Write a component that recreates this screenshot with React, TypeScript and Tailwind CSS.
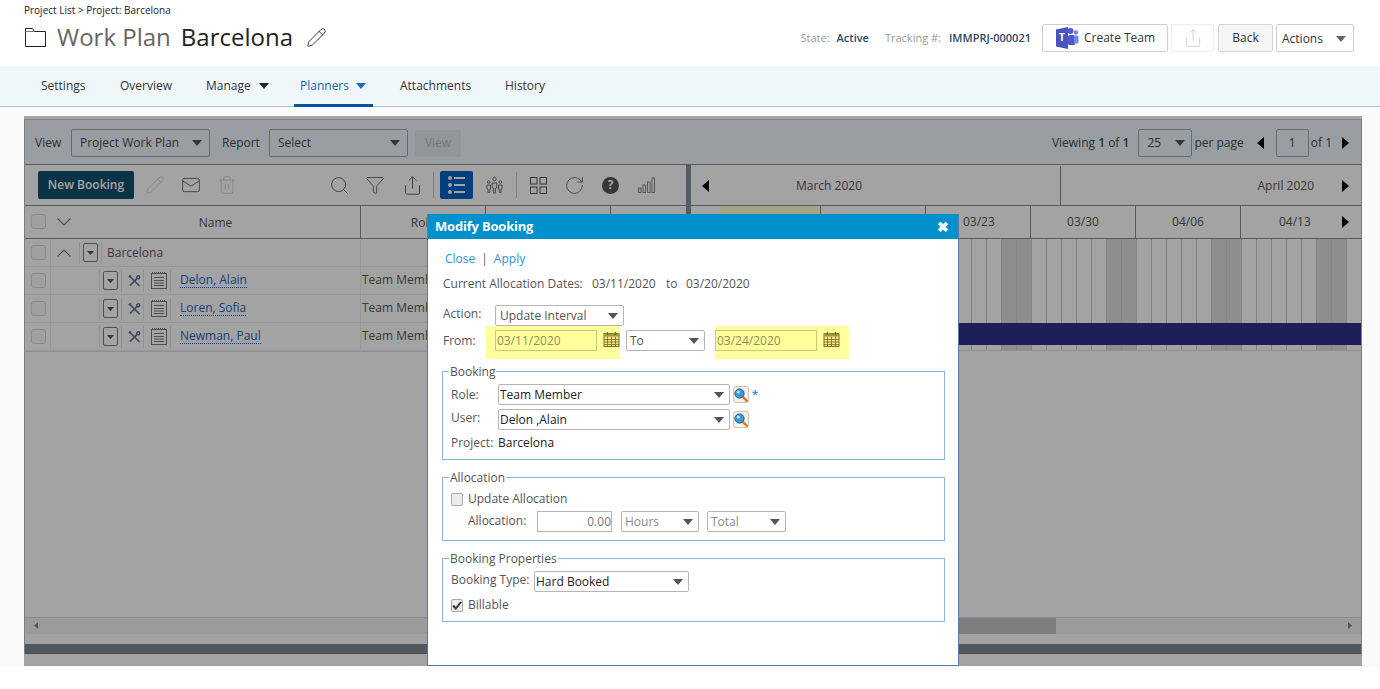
import React from "react";
import { Pencil, Mail, Trash2, Search, Filter, Share, RotateCw } from "lucide-react";

function Caret({ color = "#555" }: { color?: string }) {
  return (
    <svg width="10" height="6" viewBox="0 0 10 6" className="shrink-0">
      <path d="M0 0h10L5 6z" fill={color} />
    </svg>
  );
}

function Sel({ label, className, textClass }: { label: string; className: string; textClass?: string }) {
  return (
    <div className={"flex items-center justify-between bg-white border border-[#b5b5b5] rounded-[2px] pr-[5px] shrink-0 " + className}>
      <span className={"truncate " + (textClass ?? "pl-[3px] text-[#333]")}>{label}</span>
      <Caret />
    </div>
  );
}

function Arrow({ dir, color = "#000", size = 10 }: { dir: "l" | "r"; color?: string; size?: number }) {
  return (
    <svg width={size * 0.7} height={size * 1.2} viewBox="0 0 7 12" className="shrink-0">
      <path d={dir === "l" ? "M7 0v12L0 6z" : "M0 0v12l7-6z"} fill={color} />
    </svg>
  );
}

function Chev({ up }: { up?: boolean }) {
  return (
    <svg width="14" height="8" viewBox="0 0 14 8" className="shrink-0" fill="none" stroke="#7a7a7a" strokeWidth="1.1">
      <path d={up ? "M0.5 7.500 7 1l6.500 6.500" : "M0.5 0.500 7 7l6.500-6.500"} />
    </svg>
  );
}

function Teams() {
  return (
    <svg width="24" height="24" viewBox="0 0 24 24" className="shrink-0">
      <circle cx="15.5" cy="5" r="3" fill="#5059c9" />
      <circle cx="21" cy="6.5" r="2.2" fill="#7b83eb" />
      <rect x="13" y="9" width="7" height="10" rx="1.5" fill="#5059c9" />
      <rect x="19" y="9.5" width="4.5" height="8" rx="1.5" fill="#7b83eb" />
      <path d="M1 3.5 13 1v22L1 20.5z" fill="#4b53bc" />
      <text x="7" y="15" textAnchor="middle" fontSize="10" fontWeight="700" fill="#fff" fontFamily="Open Sans, sans-serif">T</text>
    </svg>
  );
}

function Calendar() {
  return (
    <svg width="17" height="17" viewBox="0 0 17 17" className="shrink-0">
      <rect x="1" y="2.500" width="15" height="13" fill="#f6e28a" stroke="#7a7020" />
      <rect x="1" y="2.500" width="15" height="3" fill="#a09a3a" />
      <path d="M1 8.500h15M1 11h15M1 13.500h15M4.500 5.500v10M8.500 5.500v10M12.500 5.500v10" stroke="#7a7020" strokeWidth="0.8" />
      <path d="M4.500 1v3M12.500 1v3" stroke="#6a6a3a" strokeWidth="1.2" />
    </svg>
  );
}

function Lookup() {
  return (
    <div className="w-[16px] h-[17px] border border-[#c9c4ae] rounded-[3px] bg-[#f4f1e4] flex items-center justify-center shrink-0">
      <svg width="14" height="14" viewBox="0 0 14 14">
        <path d="M8.500 8.500 13 13" stroke="#d9752b" strokeWidth="2.4" strokeLinecap="round" />
        <circle cx="5.500" cy="5.500" r="4.600" fill="#3d9ad6" stroke="#1d5f96" />
        <circle cx="4.300" cy="4" r="1.600" fill="#bfe3f8" />
      </svg>
    </div>
  );
}

function RowCheck() {
  return <div className="w-[15px] h-[15px] border border-[#d6d6d6] rounded-[3px] bg-[#fbfbfb] shrink-0" />;
}

function DropBox() {
  return (
    <div className="w-[15px] h-[19px] border border-[#7a7a7a] rounded-[2px] flex items-center justify-center shrink-0">
      <svg width="7" height="4" viewBox="0 0 7 4"><path d="M0 0h7L3.500 4z" fill="#555" /></svg>
    </div>
  );
}

function Tools() {
  return (
    <svg width="13" height="14" viewBox="0 0 14 14" className="shrink-0" fill="none" stroke="#6b7a96" strokeWidth="1.700">
      <path d="M1.500 1.500 12.500 12.500" />
      <path d="M12.500 1.500 2 12" />
      <circle cx="11" cy="3" r="1.600" fill="#fff" />
      <path d="M0.800 3 3 0.800" />
    </svg>
  );
}

function Notes() {
  return (
    <svg width="16" height="17" viewBox="0 0 16 17" className="shrink-0" fill="none" stroke="#7a7a7a" strokeWidth="1">
      <rect x="0.500" y="1.500" width="15" height="15" />
      <path d="M3 5.500h10M3 8.500h10M3 11h10M3 13.500h10" />
      <path d="M1 1h14" strokeDasharray="1 1" strokeWidth="2" />
    </svg>
  );
}

function PersonRow({ name }: { name: string }) {
  return (
    <div className="flex h-[28px] border-b border-[#eeeeee]">
      <div className="w-[26px] flex items-center justify-center border-r border-[#eeeeee] pl-[1px] shrink-0"><RowCheck /></div>
      <div className="w-[310px] flex items-center border-r border-[#eeeeee] shrink-0 pl-[48px]">
        <div className="h-[22px] flex items-center border-l border-[#e5e5e5] pl-[3px] pr-[3px]"><DropBox /></div>
        <div className="h-[22px] flex items-center border-l border-[#e5e5e5] pl-[6px] pr-[2px]"><Tools /></div>
        <div className="h-[22px] flex items-center border-x border-[#e5e5e5] pl-[7px] pr-[3px]"><Notes /></div>
        <span className="ml-[9px] mb-[2px] text-[#2968c0] border-b border-dotted border-[#1f5fc0] leading-[15px]">{name}</span>
      </div>
      <div className="w-[125px] flex items-center pl-[1px] pb-[2px] border-r border-[#eeeeee] text-[#5a5a5a] shrink-0">Team Member</div>
      <div className="flex-1" />
    </div>
  );
}

const lightDay = "w-[15px] shrink-0 border-r border-[#cbcbcb]";
const darkDay = "w-[15px] shrink-0 bg-[#dedede] border-r border-[#d2d2d2]";

function Week() {
  return (
    <div className="flex shrink-0">
      <div className={lightDay} />
      <div className={lightDay} />
      <div className={lightDay} />
      <div className={lightDay} />
      <div className={lightDay} />
      <div className={darkDay} />
      <div className={darkDay} />
    </div>
  );
}

function Panel() {
  return (
    <div className="relative h-full bg-white flex flex-col overflow-hidden">
      <div className="h-[4px] shrink-0 border-b border-[#d0d0d0]" />
      <div className="flex-1 min-h-0 flex flex-col border-x border-[#c4c4c4]">
        {/* view bar */}
        <div className="h-[45px] shrink-0 bg-[#eef8fc] border-b border-[#8f8f8f] flex items-center pt-[2px] pl-[10px] pr-[12px] text-[#4a4a4a]">
          <span className="w-[36px]">View</span>
          <Sel label="Project Work Plan" className="w-[139px] h-[28px] !border-[#a8a8a8] !bg-transparent !pr-[7px]" textClass="pl-[8px] text-[#4a4a4a]" />
          <span className="ml-[12px] w-[47px]">Report</span>
          <Sel label="Select" className="w-[139px] h-[28px] !border-[#a8a8a8] !bg-transparent !pr-[7px]" textClass="pl-[8px] text-[#4a4a4a]" />
          <div className="ml-[7px] w-[46px] h-[27px] bg-[#e1ebf0] rounded-[2px] flex items-center justify-center text-[#b5bfc4]">View</div>
          <div className="flex-1" />
          <span>Viewing <b className="font-semibold">1</b> of <b className="font-semibold">1</b></span>
          <Sel label="25" className="ml-[9px] w-[54px] h-[28px] !border-[#a8a8a8] !bg-transparent !pr-[6px]" textClass="pl-[8px] text-[#4a4a4a]" />
          <span className="ml-[2px]">per page</span>
          <div className="ml-[13px] w-[10px]"><Arrow dir="l" /></div>
          <div className="ml-[9px] w-[33px] h-[28px] border border-[#a8a8a8] rounded-[2px] flex items-center justify-center">1</div>
          <span className="ml-[2px]">of 1</span>
          <div className="ml-[10px]"><Arrow dir="r" /></div>
        </div>
        {/* planner */}
        <div className="flex-1 min-h-0 flex">
          {/* left pane */}
          <div className="w-[661px] shrink-0 flex flex-col">
            <div className="h-[40px] shrink-0 flex items-center pl-[13px] text-[#5a5a5a]">
              <div className="w-[96px] h-[28px] rounded-[2px] bg-[#105070] text-white font-semibold flex items-center justify-center shrink-0">New Booking</div>
              <Pencil size={20} strokeWidth={0.9} color="#c8c8c8" className="ml-[11px] shrink-0" />
              <Mail size={20} strokeWidth={1.1} color="#666" className="ml-[16px] shrink-0" />
              <Trash2 size={20} strokeWidth={0.9} color="#c8c8c8" className="ml-[16px] shrink-0" />
              <Search size={21} strokeWidth={1} color="#555" className="ml-[92px] shrink-0" />
              <Filter size={20} strokeWidth={1} color="#555" className="ml-[15px] shrink-0" />
              <Share size={21} strokeWidth={1} color="#555" className="ml-[17px] shrink-0" />
              <div className="ml-[10px] h-[26px] border-l border-[#cccccc]" />
              <div className="ml-[6px] w-[33px] h-[28px] rounded-[2px] bg-[#0062c4] flex flex-col justify-center gap-[3px] px-[8px] shrink-0">
                {[0, 1, 2].map((i) => (
                  <div key={i} className="flex items-center gap-[2px]">
                    <div className="w-[4px] h-[4px] rounded-full bg-white" />
                    <div className="flex-1 h-[1.5px] bg-white" />
                  </div>
                ))}
              </div>
              <svg width="17" height="18" viewBox="0 0 17 18" className="ml-[13px] shrink-0" fill="none" stroke="#777" strokeWidth="1">
                <circle cx="8.500" cy="3" r="1.800" />
                <path d="M6 7h5l-.5 5h-1v5h-2v-5h-1z" />
                <circle cx="2.700" cy="6" r="1.300" />
                <path d="M1 9h3.500v4h-.7v3.500H2V13h-1z" />
                <circle cx="14.300" cy="6" r="1.300" />
                <path d="M12.500 9H16v4h-1v3.500h-1.700V13h-.8z" />
              </svg>
              <div className="ml-[13px] h-[26px] border-l border-[#cccccc]" />
              <svg width="17" height="17" viewBox="0 0 17 17" className="ml-[13px] shrink-0" fill="none" stroke="#555" strokeWidth="1">
                <rect x="0.500" y="0.500" width="6.500" height="6.500" />
                <rect x="10" y="0.500" width="6.500" height="6.500" />
                <rect x="0.500" y="10" width="6.500" height="6.500" />
                <rect x="10" y="10" width="6.500" height="6.500" />
              </svg>
              <RotateCw size={21} strokeWidth={0.9} color="#555" className="ml-[17px] shrink-0" />
              <div className="ml-[17px] w-[17px] h-[17px] rounded-full bg-[#555] text-white text-[12px] font-bold flex items-center justify-center shrink-0">?</div>
              <svg width="17" height="16" viewBox="0 0 17 16" className="ml-[19px] shrink-0" fill="none" stroke="#8a8a8a">
                <rect x="0.500" y="11" width="2.500" height="4.500" />
                <rect x="5" y="8" width="2.500" height="7.500" />
                <rect x="9.500" y="5" width="2.500" height="10.500" />
                <rect x="14" y="1" width="2.500" height="14.500" />
              </svg>
            </div>
            <div className="h-[34px] shrink-0 flex border-y border-[#8c8c8c] text-[#555] font-medium">
              <div className="w-[26px] flex items-center justify-center pl-[1px] pb-[2px] shrink-0"><RowCheck /></div>
              <div className="w-[310px] shrink-0 border-r border-[#8c8c8c] flex items-center pl-[6px]">
                <Chev />
                <span className="flex-1 text-center pt-[1px]">Name</span>
              </div>
              <div className="w-[125px] shrink-0 border-r border-[#8c8c8c] flex items-center justify-center pt-[1px]">Role</div>
              <div className="w-[125px] shrink-0 border-r border-[#8c8c8c]" />
              <div className="flex-1" />
            </div>
            <div className="flex h-[28px] border-b border-[#eeeeee] shrink-0">
              <div className="w-[26px] flex items-center justify-center border-r border-[#eeeeee] pl-[1px] shrink-0"><RowCheck /></div>
              <div className="w-[310px] flex items-center border-r border-[#eeeeee] shrink-0 pl-[6px]">
                <Chev up />
                <div className="ml-[8px] h-[22px] flex items-center border-l border-[#e5e5e5] pl-[3px] pr-[3px]"><DropBox /></div>
                <span className="pl-[5px] text-[#5a5a5a] border-l border-[#e5e5e5] h-[22px] flex items-center">Barcelona</span>
              </div>
              <div className="w-[125px] border-r border-[#eeeeee] shrink-0" />
            </div>
            <PersonRow name="Delon, Alain" />
            <PersonRow name="Loren, Sofia" />
            <div className="border-b border-[#dbe2ea]"><PersonRow name="Newman, Paul" /></div>
          </div>
          {/* splitter */}
          <div className="w-[5px] shrink-0 bg-[#878e9b] h-[60px]" />
          {/* right pane */}
          <div className="flex-1 min-w-0 flex flex-col overflow-hidden">
            <div className="h-[40px] shrink-0 flex text-[#555] font-medium pt-[1px]">
              <div className="w-[370px] shrink-0 border-r border-[#8c8c8c] flex items-center pl-[11px]">
                <Arrow dir="l" />
                <span className="ml-[87px]">March 2020</span>
              </div>
              <div className="flex-1 flex items-center justify-end pr-[12px]">
                <span className="mr-[28px]">April 2020</span>
                <Arrow dir="r" />
              </div>
            </div>
            <div className="h-[34px] shrink-0 flex border-y border-[#8c8c8c] text-[#555]">
              <div className="w-[29px] shrink-0" />
              <div className="w-[101px] shrink-0 bg-[#ffffd0] border-r border-[#8c8c8c]" />
              <div className="w-[105px] shrink-0 border-r border-[#8c8c8c]" />
              <div className="w-[105px] shrink-0 border-r border-[#8c8c8c] flex items-center pl-[37px]">03/23</div>
              <div className="w-[105px] shrink-0 border-r border-[#8c8c8c] flex items-center justify-center">03/30</div>
              <div className="w-[105px] shrink-0 border-r border-[#8c8c8c] flex items-center justify-center">04/06</div>
              <div className="flex-1 flex items-center pl-[38px] pr-[12px] justify-between">
                <span>04/13</span>
                <Arrow dir="r" />
              </div>
            </div>
            <div className="relative h-[112px] shrink-0 flex border-b border-[#dbe2ea] overflow-hidden pl-[26px]">
              <Week /><Week /><Week /><Week /><Week /><Week /><Week />
              <div className="absolute left-0 right-0 top-[84px] h-[22px] bg-[#30308c]" />
            </div>
          </div>
        </div>
        {/* horizontal scrollbar */}
        <div className="h-[17px] shrink-0 bg-[#f3f3f3] flex items-center justify-between px-[9px] border-t border-[#d4dde8] relative">
          <Arrow dir="l" color="#888" size={6} />
          <div className="absolute left-[800px] w-[231px] h-full bg-[#c6c6c6]" />
          <Arrow dir="r" color="#888" size={6} />
        </div>
        <div className="h-[10px] shrink-0" />
        <div className="h-[10px] shrink-0 bg-[#838996] border-b border-[#7a7a7a]" />
      </div>
      <div className="h-[12px] shrink-0" />
      {/* dim layer */}
      <div className="absolute inset-0 bg-black/36" />
      {/* modal */}
      <div className="absolute left-[403px] top-[98px] w-[532px] h-[452px] bg-white border border-[#5a78a8] border-t-0 flex flex-col text-[#555]">
        <div className="h-[25px] shrink-0 bg-[#0090cc] flex items-center justify-between px-[7px] text-white font-bold text-[13px] tracking-[-0.2px]">
          <span>Modify Booking</span>
          <span className="text-[14px] leading-none pr-[2px]">✖</span>
        </div>
        <div className="flex-1 pl-[15px] pr-[13px] text-[#555]">
          <div className="mt-[11px] h-[18px] pl-[2px] flex items-center text-[#2b97d4] gap-[6px]">
            <span>Close</span><span className="text-[#666]">|</span><span>Apply</span>
          </div>
          <div className="mt-[7px] h-[18px] flex items-center">
            <span className="w-[149px]">Current Allocation Dates:</span>
            <span className="w-[74px]">03/11/2020</span>
            <span className="w-[20px]">to</span>
            <span>03/20/2020</span>
          </div>
          <div className="mt-[12px] h-[21px] flex items-center">
            <span className="w-[52px] -mt-[4px]">Action:</span>
            <Sel label="Update Interval" className="w-[129px] h-[21px]" textClass="pl-[4px] text-[#555]" />
          </div>
          <div className="h-[33px] flex items-start">
            <span className="w-[43px] mt-[6px]">From:</span>
            <div className="w-[134px] h-[33px] bg-[#ffff9e] flex items-start pt-[4px] pl-[9px]">
              <div className="w-[102px] h-[21px] border border-[#c9c97a] flex items-center pl-[1px] text-[#8f8f5a]">03/11/2020</div>
              <div className="ml-[6px] mt-[1px]"><Calendar /></div>
            </div>
            <Sel label="To" className="ml-[6px] mt-[4px] w-[79px] h-[21px]" textClass="pl-[3px] text-[#555]" />
            <div className="ml-[10px] w-[134px] h-[33px] bg-[#ffff9e] flex items-start pt-[4px]">
              <div className="w-[102px] h-[21px] border border-[#c9c97a] flex items-center pl-[1px] text-[#8f8f5a]">03/24/2020</div>
              <div className="ml-[6px] mt-[1px]"><Calendar /></div>
            </div>
          </div>
          <fieldset className="mt-[4px] w-[503px] -ml-[1px] h-[97px] border border-[#8fb6d2] px-[8px]">
            <legend className="-ml-[2px] px-[1px] h-[16px] leading-[18px]">Booking</legend>
            <div className="mt-[5px] h-[21px] flex items-center">
              <span className="w-[47px]">Role:</span>
              <Sel label="Team Member" className="w-[232px] h-[21px]" textClass="pl-[1px] text-[#222]" />
              <div className="ml-[3px]"><Lookup /></div>
              <span className="ml-[3px] text-[#2b97d4] font-bold text-[11px]">*</span>
            </div>
            <div className="mt-[4px] h-[21px] flex items-center">
              <span className="w-[47px] -mt-[4px]">User:</span>
              <Sel label="Delon ,Alain" className="w-[232px] h-[21px]" textClass="pl-[1px] text-[#222]" />
              <div className="ml-[3px]"><Lookup /></div>
            </div>
            <div className="mt-[4px] h-[18px] flex items-center">
              <span className="w-[47px] whitespace-nowrap">Project:</span>
              <span className="text-[#222]">Barcelona</span>
            </div>
          </fieldset>
          <fieldset className="mt-[9px] w-[503px] -ml-[1px] h-[72px] border border-[#8fb6d2] px-[8px]">
            <legend className="-ml-[2px] px-[1px] h-[16px] leading-[18px]">Allocation</legend>
            <div className="mt-[6px] h-[16px] flex items-center">
              <div className="w-[12px] h-[13px] border border-[#a8a8a8] rounded-[2px] bg-[#ececec]" />
              <span className="ml-[5px]">Update Allocation</span>
            </div>
            <div className="mt-[4px] h-[21px] flex items-center pl-[17px]">
              <span className="w-[69px] -mt-[2px]">Allocation:</span>
              <div className="w-[75px] h-[21px] border border-[#b5b5b5] text-right text-[#777] leading-[19px]">0.00</div>
              <Sel label="Hours" className="ml-[9px] w-[78px] h-[21px]" textClass="pl-[3px] text-[#888]" />
              <Sel label="Total" className="ml-[8px] w-[79px] h-[21px]" textClass="pl-[3px] text-[#888]" />
            </div>
          </fieldset>
          <fieldset className="mt-[9px] w-[503px] -ml-[1px] h-[72px] border border-[#8fb6d2] px-[8px]">
            <legend className="-ml-[2px] px-[1px] h-[16px] leading-[18px]">Booking Properties</legend>
            <div className="mt-[5px] h-[21px] flex items-center">
              <span className="w-[83px] -mt-[3px] whitespace-nowrap">Booking Type:</span>
              <Sel label="Hard Booked" className="w-[155px] h-[21px]" textClass="pl-[1px] text-[#222]" />
            </div>
            <div className="mt-[5px] h-[16px] flex items-center">
              <div className="w-[12px] h-[13px] border border-[#a8a8a8] rounded-[2px] bg-[#ececec] flex items-center justify-center">
                <svg width="10" height="9" viewBox="0 0 10 9"><path d="M1 4.500 3.800 7.500 9 1" stroke="#333" strokeWidth="2" fill="none" /></svg>
              </div>
              <span className="ml-[5px]">Billable</span>
            </div>
          </fieldset>
        </div>
      </div>
    </div>
  );
}

export default function App() {
  return (
    <div className="h-[689px] w-[1380px] overflow-hidden bg-white flex flex-col text-[12px] font-['Open_Sans',sans-serif] text-[#333]">
      {/* header */}
      <div className="h-[66px] shrink-0 flex items-start pl-[24px] pr-[26px]">
        <div className="flex flex-col flex-1">
          <div className="mt-[3px] h-[14px] text-[10px] leading-[14px] text-[#222]">Project List &gt; Project: Barcelona</div>
          <div className="mt-[2px] h-[36px] flex items-center">
            <svg width="21" height="20" viewBox="0 0 21 20" className="shrink-0 ml-[1px]" fill="none" stroke="#222" strokeWidth="1">
              <path d="M0.500 19.500V1.500h7l2 3h11v15z" />
              <path d="M0.500 4.500h9" stroke="#8a6a9a" />
            </svg>
            <span className="ml-[11px] text-[24px] text-[#666]">Work Plan</span>
            <span className="ml-[10px] text-[24px] text-[#222]">Barcelona</span>
            <Pencil size={21} strokeWidth={1.1} color="#333" className="ml-[13px]" />
          </div>
        </div>
        <div className="mt-[24px] h-[28px] flex items-center text-[11px]">
          <span className="text-[#999]">State:</span>
          <span className="ml-[7px] font-semibold text-[#2b4a66]">Active</span>
          <span className="ml-[16px] text-[#999]">Tracking #:</span>
          <span className="ml-[8px] font-semibold text-[#2b4a66]">IMMPRJ-000021</span>
          <div className="ml-[11px] w-[126px] h-[28px] border border-[#cfcfcf] rounded-[2px] flex items-center pl-[12px] text-[12px] text-[#333]">
            <Teams />
            <span className="ml-[5px]">Create Team</span>
          </div>
          <div className="ml-[3px] w-[43px] h-[28px] border border-[#eeeeee] rounded-[2px] flex items-center justify-center">
            <Share size={20} strokeWidth={1} color="#ccc" />
          </div>
          <div className="ml-[4px] w-[55px] h-[28px] border border-[#d5d5d5] rounded-[2px] bg-[#f5f5f5] flex items-center justify-center text-[12px] text-[#333]">Back</div>
          <div className="ml-[3px] w-[78px] h-[28px] border border-[#cfcfcf] rounded-[2px] flex items-center justify-between pl-[5px] pr-[7px] pt-[1px] text-[12px] text-[#333]">
            <span>Actions</span>
            <Caret color="#666" />
          </div>
        </div>
      </div>
      {/* nav */}
      <div className="h-[41px] shrink-0 bg-[#f0f7fb] border-b border-[#a9c2cf] flex pl-[41px] text-[12px] text-[#333]">
        <div className="flex items-center w-[79px]">Settings</div>
        <div className="flex items-center w-[86px]">Overview</div>
        <div className="flex items-center gap-[8px] w-[88px]">Manage <Caret color="#222" /></div>
        <div className="flex flex-col w-[106px]">
          <div className="flex-1 flex items-center w-[79px] pl-[6px] pt-[1px] gap-[7px] text-[#1c5fa8] font-medium border-b-[3px] border-[#0054a6] -mb-[1px]">Planners <Caret color="#1c6ac0" /></div>
        </div>
        <div className="flex items-center w-[105px]">Attachments</div>
        <div className="flex items-center">History</div>
      </div>
      {/* content */}
      <div className="h-[560px] shrink-0 bg-[#fafafa] pl-[24px] pr-[18px] pt-[9px]">
        <div className="h-[550px]"><Panel /></div>
      </div>
    </div>
  );
}
